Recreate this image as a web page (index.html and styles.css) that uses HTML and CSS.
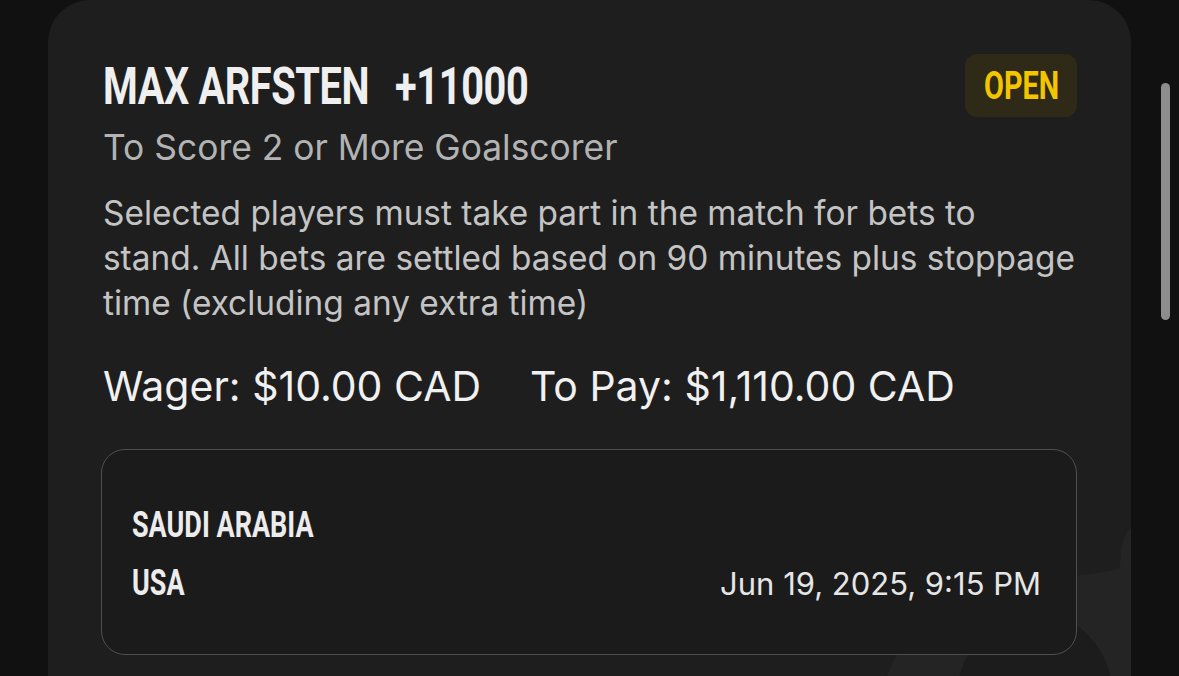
FILE: index.html
```html
<!DOCTYPE html>
<html lang="en">
<head>
<meta charset="utf-8">
<title>Bet slip</title>
<link rel="stylesheet" href="styles.css">
</head>
<body>
<div class="screen">
  <div class="card">
    <svg class="watermark" width="260" height="176" viewBox="0 0 260 176" aria-hidden="true">
      <path d="M260 28 C 252 34, 249 50, 249 68 C 240 72, 222 74, 200 76 L 200 176 L 260 176 Z" fill="#242424"/>
      <path d="M16 176 C 20 165, 26 152, 34 145 L 210 145 L 210 176 Z" fill="#242424"/>
      <ellipse cx="164" cy="198" rx="78" ry="86" fill="#1c1c1c"/>
    </svg>
    <div class="header">
      <div class="title">
        <span class="cond">MAX ARFSTEN<span class="odds">+11000</span></span>
      </div>
      <div class="badge"><span class="cond">OPEN</span></div>
    </div>
    <div class="market">To Score 2 or More Goalscorer</div>
    <p class="rules">Selected players must take part in the match for bets to<br>stand. All bets are settled based on 90 minutes plus stoppage<br>time (excluding any extra time)</p>
    <div class="amounts">
      <span>Wager: $10.00 CAD</span>
      <span>To Pay: $1,110.00 CAD</span>
    </div>
    <div class="event">
      <div class="teams">
        <div class="team"><span class="cond">SAUDI ARABIA</span></div>
        <div class="team-row">
          <div class="team"><span class="cond">USA</span></div>
          <div class="date">Jun 19, 2025, 9:15 PM</div>
        </div>
      </div>
    </div>
  </div>
  <div class="scrollbar"></div>
</div>
</body>
</html>
```
FILE: styles.css
```css
html, body {
  margin: 0;
  padding: 0;
  background: #111111;
  overflow: hidden;
}
body {
  font-family: Inter, "Noto Sans", sans-serif;
  width: 1179px;
  height: 676px;
}
.screen {
  position: relative;
  width: 1179px;
  height: 676px;
  overflow: hidden;
}
.card {
  position: relative;
  margin-left: 48px;
  width: 1083px;
  height: 676px;
  box-sizing: border-box;
  background: #1e1e1e;
  border-radius: 42px 42px 0 0;
  padding: 54px 54px 0 55px;
  overflow: hidden;
}
.watermark {
  position: absolute;
  right: 0;
  top: 500px;
}
.header {
  position: relative;
  display: flex;
  justify-content: space-between;
  align-items: flex-start;
}
.cond {
  display: inline-block;
  font-family: Roboto, "Liberation Sans", sans-serif;
  font-weight: 700;
  transform-origin: left center;
  white-space: nowrap;
}
.title {
  margin-top: 6px;
  height: 52px;
  font-size: 52px;
  line-height: 52px;
  color: #efefef;
}
.title .cond {
  transform: scaleX(0.764);
  letter-spacing: -0.5px;
}
.odds {
  margin-left: 34px;
}
.badge {
  width: 112px;
  height: 63px;
  box-sizing: border-box;
  border-radius: 12px;
  background: #2e2a17;
  color: #f3c500;
  font-size: 38px;
  line-height: 63px;
  padding-left: 19px;
}
.badge .cond {
  transform: scaleX(0.76);
}
.market {
  position: relative;
  margin-top: 9px;
  font-size: 35.4px;
  line-height: 44px;
  color: #b3b3b3;
}
.rules {
  position: relative;
  margin: 21px 0 0 0;
  font-size: 33.4px;
  line-height: 45px;
  color: #c4c4c4;
  white-space: nowrap;
}
.amounts {
  position: relative;
  margin-top: 34.5px;
  display: flex;
  gap: 49px;
  font-size: 41px;
  line-height: 50px;
  color: #f0f0f0;
}
.event {
  position: relative;
  margin: 38px 0 0 -2px;
  height: 206px;
  box-sizing: border-box;
  border: 1.5px solid #4f4f4f;
  border-radius: 24px;
  background: #1b1b1b;
  padding: 56px 35px 0 30px;
}
.teams {
  display: flex;
  flex-direction: column;
  gap: 21px;
}
.team {
  font-size: 36px;
  line-height: 36px;
  color: #ececec;
}
.team .cond {
  transform: scaleX(0.75);
}
.team-row {
  display: flex;
  justify-content: space-between;
  align-items: baseline;
}
.date {
  font-size: 31px;
  line-height: 36px;
  color: #e6e6e6;
}
.scrollbar {
  position: absolute;
  left: 1161px;
  top: 83px;
  width: 9px;
  height: 237px;
  border-radius: 5px;
  background: #8d8d8d;
}
```
